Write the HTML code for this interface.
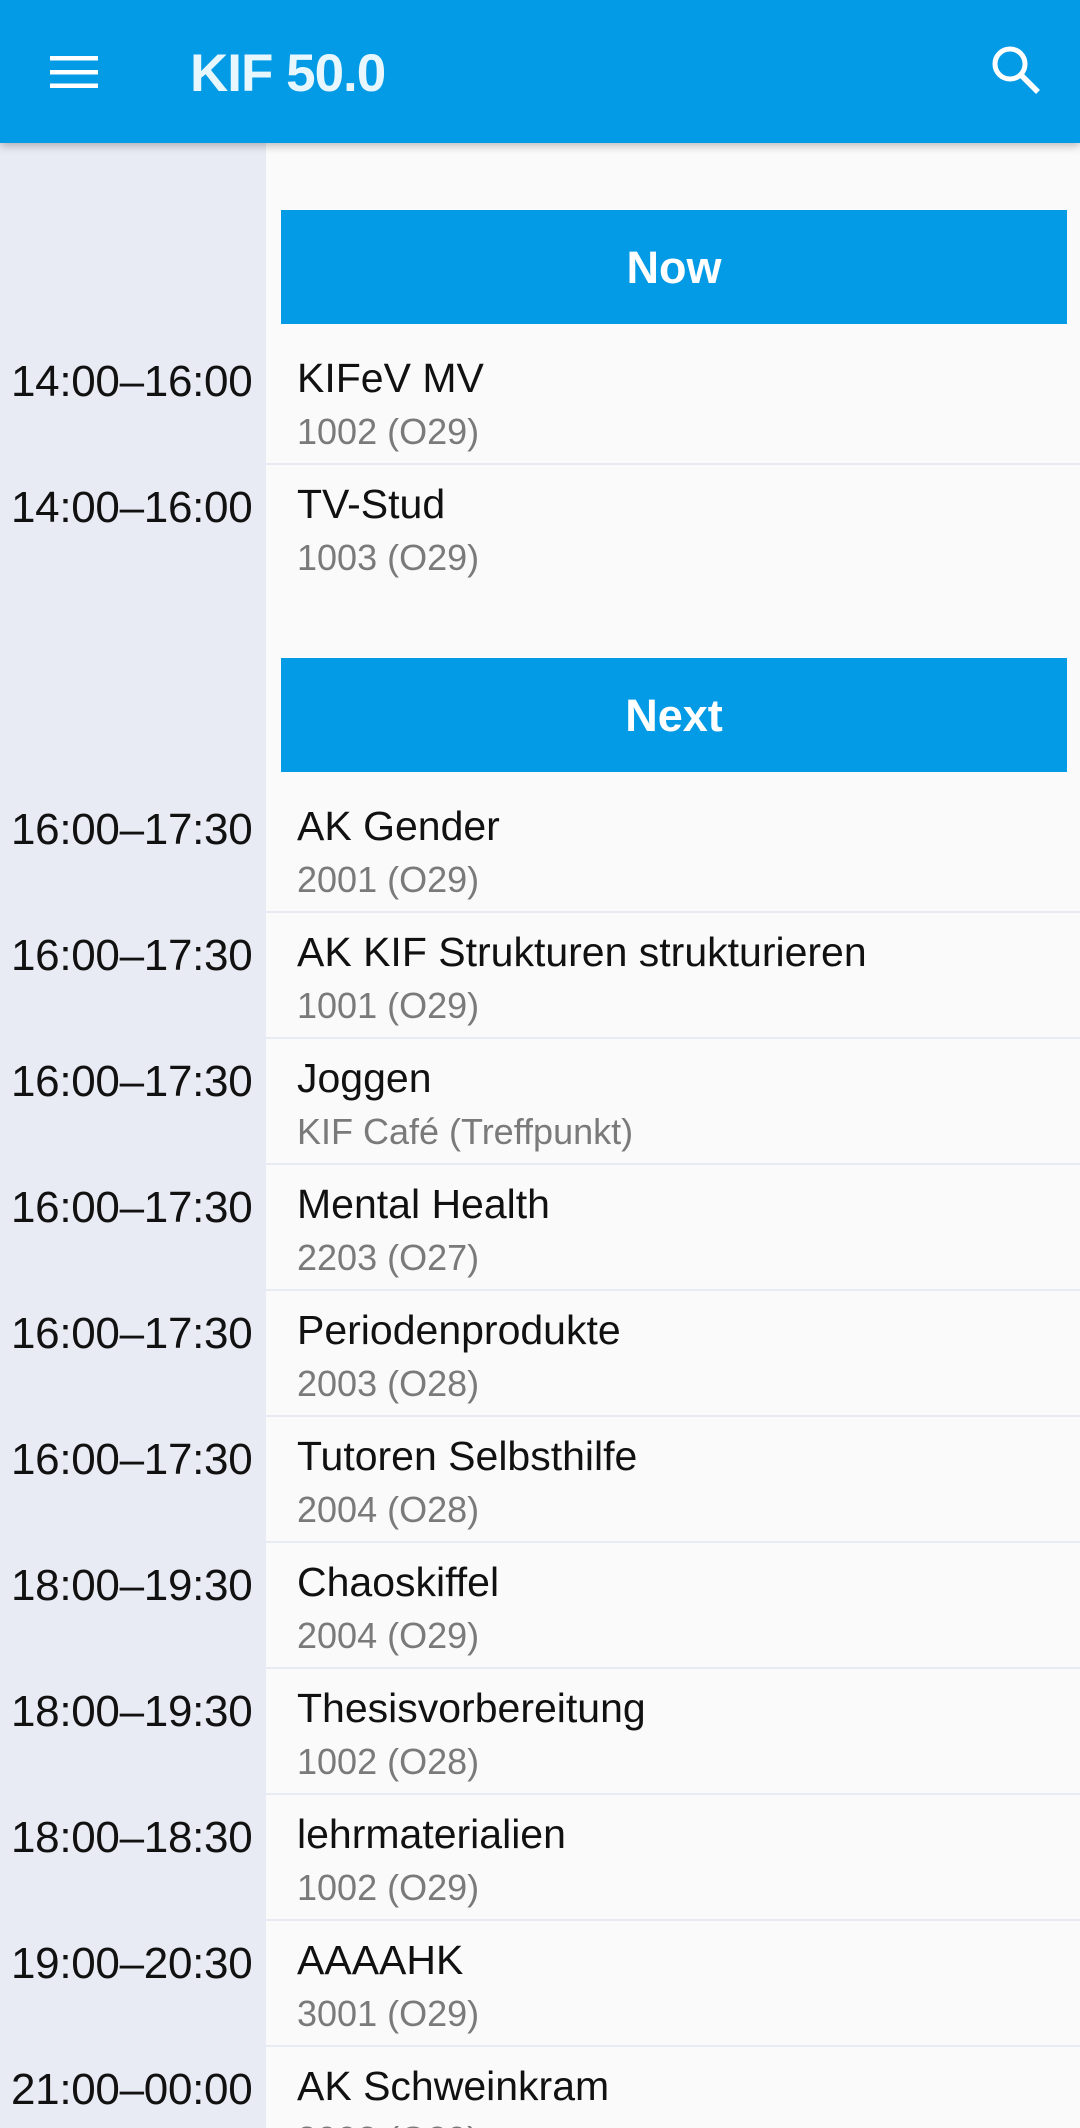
<!DOCTYPE html>
<html style="overflow:hidden"><head><meta charset="utf-8"><style>
*{margin:0;padding:0;box-sizing:border-box}
html,body{width:1080px;height:2128px;overflow:hidden}
body{background:#fafafa;font-family:"Liberation Sans",sans-serif}
#w{position:relative;width:1080px;height:2128px;overflow:hidden}
.left{position:absolute;left:0;top:0;width:266px;height:2128px;background:#e8ebf3}
.hdr{position:absolute;left:0;top:0;width:1080px;height:143px;background:#039be5;box-shadow:0 3px 8px rgba(0,0,0,.25);z-index:2}
.hdr .t{position:absolute;left:190px;top:43px;font-size:53px;font-weight:bold;color:#e8f6fd;letter-spacing:-1px}
.sec{position:absolute;left:281px;width:786px;height:114px;background:#039be5;color:#fff;font-weight:bold;font-size:45px;text-align:center;line-height:116px}
.row{position:absolute;left:0;width:1080px;height:126px}
.row .tm{position:absolute;left:11px;top:18px;font-size:44px;color:#111;letter-spacing:-0.3px}
.row .ti{position:absolute;left:297px;top:16px;font-size:41px;color:#111;white-space:nowrap}
.row .su{position:absolute;left:297px;top:72px;font-size:36px;color:#7a7a7a;white-space:nowrap}
.row .sep{position:absolute;left:266px;right:0;bottom:0;height:2px;background:#e8ebf3}
</style></head><body><div id="w">
<div class="left"></div>
<div class="hdr">
<svg style="position:absolute;left:50px;top:56px" width="48" height="32"><rect y="0" width="48" height="4.5" fill="#fff"/><rect y="14" width="48" height="4.5" fill="#fff"/><rect y="27.5" width="48" height="4.5" fill="#fff"/></svg>
<div class="t">KIF 50.0</div>
<svg style="position:absolute;left:990px;top:44px" width="52" height="52" viewBox="0 0 52 52"><circle cx="20" cy="20" r="15" fill="none" stroke="#fff" stroke-width="5"/><path d="M31 31 L48 48" stroke="#fff" stroke-width="5.5"/></svg>
</div>
<div class="sec" style="top:210px">Now</div>
<div class="row" style="top:339px"><div class="tm">14:00–16:00</div><div class="ti">KIFeV MV</div><div class="su">1002 (O29)</div><div class="sep"></div></div>
<div class="row" style="top:465px"><div class="tm">14:00–16:00</div><div class="ti">TV-Stud</div><div class="su">1003 (O29)</div></div>
<div class="sec" style="top:658px">Next</div>
<div class="row" style="top:787px"><div class="tm">16:00–17:30</div><div class="ti">AK Gender</div><div class="su">2001 (O29)</div><div class="sep"></div></div>
<div class="row" style="top:913px"><div class="tm">16:00–17:30</div><div class="ti">AK KIF Strukturen strukturieren</div><div class="su">1001 (O29)</div><div class="sep"></div></div>
<div class="row" style="top:1039px"><div class="tm">16:00–17:30</div><div class="ti">Joggen</div><div class="su">KIF Café (Treffpunkt)</div><div class="sep"></div></div>
<div class="row" style="top:1165px"><div class="tm">16:00–17:30</div><div class="ti">Mental Health</div><div class="su">2203 (O27)</div><div class="sep"></div></div>
<div class="row" style="top:1291px"><div class="tm">16:00–17:30</div><div class="ti">Periodenprodukte</div><div class="su">2003 (O28)</div><div class="sep"></div></div>
<div class="row" style="top:1417px"><div class="tm">16:00–17:30</div><div class="ti">Tutoren Selbsthilfe</div><div class="su">2004 (O28)</div><div class="sep"></div></div>
<div class="row" style="top:1543px"><div class="tm">18:00–19:30</div><div class="ti">Chaoskiffel</div><div class="su">2004 (O29)</div><div class="sep"></div></div>
<div class="row" style="top:1669px"><div class="tm">18:00–19:30</div><div class="ti">Thesisvorbereitung</div><div class="su">1002 (O28)</div><div class="sep"></div></div>
<div class="row" style="top:1795px"><div class="tm">18:00–18:30</div><div class="ti">lehrmaterialien</div><div class="su">1002 (O29)</div><div class="sep"></div></div>
<div class="row" style="top:1921px"><div class="tm">19:00–20:30</div><div class="ti">AAAAHK</div><div class="su">3001 (O29)</div><div class="sep"></div></div>
<div class="row" style="top:2047px;height:81px;overflow:hidden"><div class="tm">21:00–00:00</div><div class="ti">AK Schweinkram</div><div class="su">3002 (O29)</div></div>
</div></body></html>
